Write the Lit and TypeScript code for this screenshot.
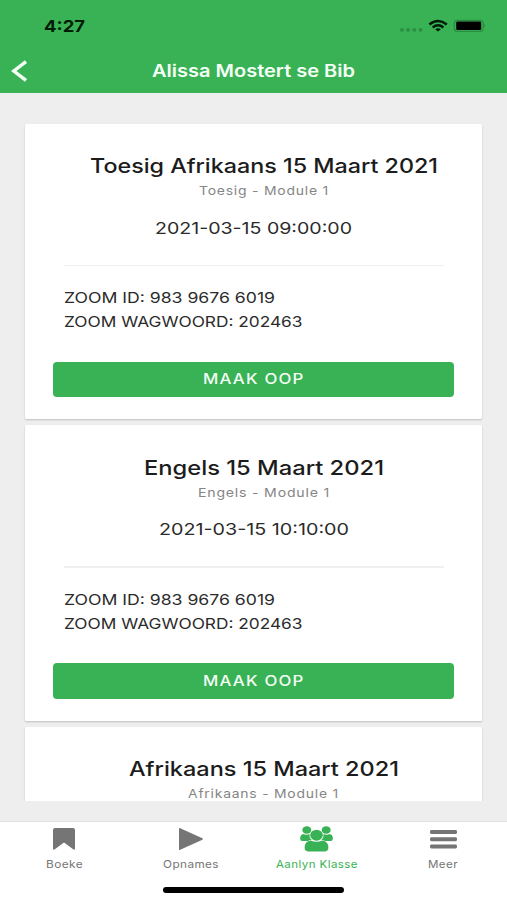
import { LitElement, html, svg, css, nothing } from "lit";
import { customElement, property } from "lit/decorators.js";

/** A single line of text fitted to a given width. */
@customElement("fit-text")
class FitText extends LitElement {
  @property() text = "";
  @property({ type: Number }) width = 100;
  @property({ type: Number }) height = 20;
  @property({ type: Number }) base = 15;

  static styles = css`
    :host { display: block; }
    .line { display: block; overflow: visible; }
    .glyphs { fill: currentColor; }
  `;

  render() {
    return html`<svg class="line" width=${this.width} height=${this.height}>
      <text class="glyphs" x="0" y=${this.base} textLength=${this.width} lengthAdjust="spacingAndGlyphs">${this.text}</text>
    </svg>`;
  }
}

interface Session {
  time: string;
  timeWidth: number;
  zoomId: string;
  password: string;
}

interface Lesson {
  title: string;
  titleWidth: number;
  module: string;
  moduleWidth: number;
  session?: Session;
}

const lessons: Lesson[] = [
  {
    title: "Toesig Afrikaans 15 Maart 2021", titleWidth: 348,
    module: "Toesig - Module 1", moduleWidth: 130,
    session: { time: "2021-03-15 09:00:00", timeWidth: 197, zoomId: "983 9676 6019", password: "202463" },
  },
  {
    title: "Engels 15 Maart 2021", titleWidth: 240,
    module: "Engels - Module 1", moduleWidth: 132,
    session: { time: "2021-03-15 10:10:00", timeWidth: 190, zoomId: "983 9676 6019", password: "202463" },
  },
  {
    title: "Afrikaans 15 Maart 2021", titleWidth: 270,
    module: "Afrikaans - Module 1", moduleWidth: 151,
  },
];

const bookmark = svg`<path d="M2 0H20Q22 0 22 2V20.4Q22 22.4 20.2 21.2L11 14.6L1.8 21.2Q0 22.4 0 20.4V2Q0 0 2 0Z"/>`;
const play = svg`<path d="M0 .8Q0-.4 1.2.2L23.4 10.2Q24.6 11 23.4 11.8L1.2 21.8Q0 22.4 0 21.2Z"/>`;
const people = svg`
  <ellipse cx="6.8" cy="4" rx="4.5" ry="3.8"/><ellipse cx="26.2" cy="4" rx="4.5" ry="3.8"/>
  <path d="M3.4 8Q6.6 9.4 9.6 7.9Q9 11.6 11.8 14Q9.4 13.8 8 14.9H2.2Q.2 14.9 .2 12.9V11.2Q.5 8.6 3.4 8Z"/>
  <path d="M29.6 8Q26.4 9.4 23.4 7.9Q24 11.6 21.2 14Q23.6 13.8 25 14.9H30.8Q32.8 14.9 32.8 12.9V11.2Q32.5 8.6 29.6 8Z"/>
  <ellipse cx="16.5" cy="9.2" rx="6.3" ry="5.5"/>
  <path d="M10.6 14.4Q16.5 17.2 22.4 14.4Q28.4 15.2 28.4 21.6Q28.4 25.4 25 25.4H8Q4.6 25.4 4.6 21.6Q4.6 15.2 10.6 14.4Z"/>`;
const menu = svg`<rect width="27" height="4" rx="1.4"/><rect y="7.2" width="27" height="4" rx="1.4"/><rect y="14.4" width="27" height="4" rx="1.4"/>`;

const tabs = [
  { label: "Boeke", width: 37, icon: bookmark, iw: 22, ih: 22, active: false },
  { label: "Opnames", width: 56, icon: play, iw: 24, ih: 22, active: false },
  { label: "Aanlyn Klasse", width: 82, icon: people, iw: 33, ih: 26, active: true },
  { label: "Meer", width: 30, icon: menu, iw: 27, ih: 18.4, active: false },
];

@customElement("app-root")
class AppRoot extends LitElement {
  static styles = css`
    :host {
      display: flex;
      flex-direction: column;
      height: 900px;
      overflow: hidden;
      background: #eee;
      color: #222;
      font-family: Inter, "Liberation Sans", sans-serif;
    }
    .top { flex: none; height: 93.4px; background: #39b255; }
    .status {
      display: flex;
      justify-content: space-between;
      height: 48px;
      padding: 16px 21px 0 44px;
      box-sizing: border-box;
      color: #001b06;
    }
    .clock { font-size: 16.6px; font-weight: 650; }
    .signals { display: block; }
    .nav {
      display: grid;
      grid-template-columns: 40px 1fr 40px;
      align-items: center;
      justify-items: center;
      height: 45px;
      color: #f4fff6;
    }
    .nav-title { font-size: 17px; font-weight: 600; }
    .back { display: block; }
    .list {
      flex: none;
      height: 707.2px;
      box-sizing: border-box;
      padding: 30.2px 24.6px 0 25.4px;
      overflow: hidden;
    }
    .card {
      height: 295.6px;
      margin-bottom: 6px;
      box-sizing: border-box;
      padding: 29.6px 28px 0 27.8px;
      background: #fff;
      border-radius: 1.5px;
      box-shadow: 0 1px 2px rgba(0, 0, 0, 0.2);
      display: flex;
      flex-direction: column;
    }
    .heading {
      display: flex;
      flex-direction: column;
      align-items: center;
      padding-left: 20px;
    }
    .title { font-size: 20.2px; font-weight: 500; color: #1c1c1c; }
    .module { font-size: 12.3px; color: #858585; letter-spacing: 0.7px; }
    .time {
      align-self: center;
      margin-top: 14.4px;
      font-size: 16.4px;
      color: #2b2b2b;
    }
    .rule { height: 1.5px; margin: 25px 10px 22px 11px; background: #f0f0f0; }
    .details {
      display: flex;
      flex-direction: column;
      padding-left: 10.6px;
      font-size: 14.8px;
      color: #2b2b2b;
    }
    .open {
      display: flex;
      justify-content: center;
      height: 35.4px;
      margin-top: 25.8px;
      padding: 7.5px 0 0;
      box-sizing: border-box;
      border: 0;
      border-radius: 4px;
      background: #39b255;
      color: #f4fff6;
      font: 500 14.2px Inter, sans-serif;
      letter-spacing: 1px;
    }
    .tabs {
      flex: none;
      display: grid;
      grid-template-columns: repeat(4, 126.4px);
      height: 59px;
      margin-top: 20px;
      padding-left: 1px;
      border-top: 1px solid #e0e0e0;
      background: #fff;
    }
    .tab {
      display: flex;
      flex-direction: column;
      align-items: center;
      color: #757575;
      font-size: 10.8px;
      letter-spacing: 0.4px;
    }
    .tab.active { color: #39b255; }
    .picture {
      height: 35px;
      display: flex;
      align-items: center;
    }
    .icon { display: block; fill: currentColor; overflow: visible; }
    .home {
      flex: 1;
      display: flex;
      justify-content: center;
      align-items: flex-start;
      background: #fff;
    }
    .bar { width: 181px; height: 5.6px; margin-top: 6.4px; border-radius: 3px; background: #000; }
  `;

  private session(s: Session) {
    return html`
      <fit-text class="time" .text=${s.time} .width=${s.timeWidth} .height=${26} .base=${20.4}></fit-text>
      <div class="rule"></div>
      <div class="details">
        <fit-text .text=${`ZOOM ID: ${s.zoomId}`} .width=${211} .height=${24} .base=${15}></fit-text>
        <fit-text .text=${`ZOOM WAGWOORD: ${s.password}`} .width=${238.5} .height=${24} .base=${15}></fit-text>
      </div>
      <button class="open">
        <fit-text .text=${"MAAK OOP"} .width=${101.5} .height=${20} .base=${15.2}></fit-text>
      </button>`;
  }

  private card(l: Lesson) {
    return html`<article class="card">
      <div class="heading">
        <fit-text class="title" .text=${l.title} .width=${l.titleWidth} .height=${26} .base=${19.6}></fit-text>
        <fit-text class="module" .text=${l.module} .width=${l.moduleWidth} .height=${20} .base=${15.9}></fit-text>
      </div>
      ${l.session ? this.session(l.session) : nothing}
    </article>`;
  }

  render() {
    return html`
      <header class="top">
        <div class="status">
          <fit-text class="clock" .text=${"4:27"} .width=${41} .height=${20} .base=${15.8}></fit-text>
          <svg class="signals" width="87" height="20" viewBox="399 16 87 20">
            <g fill="#2b8c42">
              <circle cx="402" cy="29.8" r="1.9"/><circle cx="408.1" cy="29.8" r="1.9"/>
              <circle cx="414.3" cy="29.8" r="1.9"/><circle cx="420.5" cy="29.8" r="1.9"/>
            </g>
            <g fill="none" stroke="#001b06" stroke-width="2.5">
              <path d="M429.4 24.4Q438 17.6 446.8 24.4"/>
              <path d="M432.7 27.4Q438 23.2 443.4 27.4"/>
            </g>
            <path fill="#001b06" d="M435.2 29.2Q438 27.2 440.9 29.2L438 31.6Z"/>
            <rect x="454.3" y="20.3" width="28.9" height="11" rx="3" fill="none" stroke="#2b8c42" stroke-width="1.2"/>
            <rect x="456.2" y="21.5" width="25" height="8.6" rx="1.4" fill="#000"/>
            <path d="M484.3 23.8Q486.3 25.8 484.3 27.8Z" fill="#2b8c42"/>
          </svg>
        </div>
        <div class="nav">
          <svg class="back" width="18" height="24" fill="none" stroke="currentColor" stroke-width="3.4">
            <path d="M15 2.6L2.8 12L15 21.4"/>
          </svg>
          <fit-text class="nav-title" .text=${"Alissa Mostert se Bib"} .width=${203} .height=${24} .base=${18}></fit-text>
        </div>
      </header>
      <main class="list">${lessons.map((l) => this.card(l))}</main>
      <nav class="tabs">
        ${tabs.map((t) => html`<div class="tab ${t.active ? "active" : ""}">
          <div class="picture"><svg class="icon" width=${t.iw} height=${t.ih}>${t.icon}</svg></div>
          <fit-text .text=${t.label} .width=${t.width} .height=${14} .base=${10.8}></fit-text>
        </div>`)}
      </nav>
      <footer class="home"><div class="bar"></div></footer>
    `;
  }
}
